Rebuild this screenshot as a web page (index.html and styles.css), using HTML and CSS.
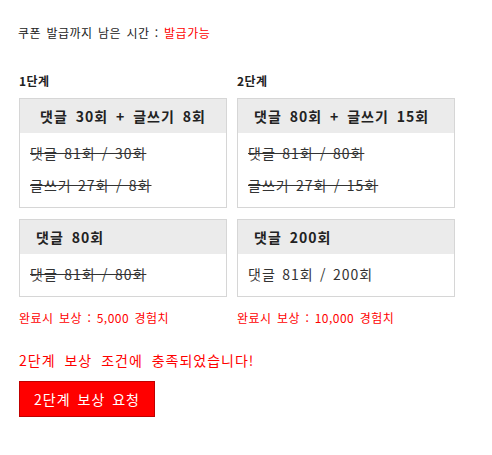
FILE: index.html
```html
<!DOCTYPE html>
<html lang="ko">
<head>
<meta charset="utf-8">
<link rel="stylesheet" href="styles.css">
</head>
<body>
<div class="page">
  <p class="timer">쿠폰 발급까지 남은 시간 : <span class="red">발급가능</span></p>
  <div class="stages">
    <div class="stage stage-1">
      <h3 class="stage-title">1단계</h3>
      <div class="box">
        <div class="box-head center">댓글 30회 + 글쓰기 8회</div>
        <div class="box-body">
          <p class="done">댓글 81회 / 30회</p>
          <p class="done">글쓰기 27회 / 8회</p>
        </div>
      </div>
      <div class="box">
        <div class="box-head">댓글 80회</div>
        <div class="box-body">
          <p class="done">댓글 81회 / 80회</p>
        </div>
      </div>
      <p class="reward">완료시 보상 : 5,000 경험치</p>
    </div>
    <div class="stage stage-2">
      <h3 class="stage-title">2단계</h3>
      <div class="box">
        <div class="box-head">댓글 80회 + 글쓰기 15회</div>
        <div class="box-body">
          <p class="done">댓글 81회 / 80회</p>
          <p class="done">글쓰기 27회 / 15회</p>
        </div>
      </div>
      <div class="box">
        <div class="box-head">댓글 200회</div>
        <div class="box-body">
          <p>댓글 81회 / 200회</p>
        </div>
      </div>
      <p class="reward">완료시 보상 : 10,000 경험치</p>
    </div>
  </div>
  <p class="msg">2단계 보상 조건에 충족되었습니다!</p>
  <button class="request" type="button">2단계 보상 요청</button>
</div>
</body>
</html>
```

FILE: styles.css
```css
* { box-sizing: border-box; }
body {
  margin: 0;
  background: #fff;
  font-family: "Noto Sans CJK KR", "Noto Sans", sans-serif;
  color: #333;
}
.page {
  padding: 24px 0 0 19px;
}
.timer {
  margin: 0 0 0 -1px;
  font-size: 12px;
  line-height: 18px;
  color: #222;
  letter-spacing: 0.5px;
  word-spacing: 1.5px;
}
.red { color: #ff0000; }
.stages {
  display: flex;
  gap: 10px;
  margin-top: 31px;
}
.stage-1 { width: 208px; }
.stage-2 { width: 218px; }
.stage-title {
  margin: 0;
  font-size: 12px;
  line-height: 16px;
  font-weight: bold;
  color: #222;
  letter-spacing: 0.5px;
}
.box {
  border: 1px solid #d6d6d6;
  margin-top: 9px;
}
.box + .box { margin-top: 11px; }
.box-head {
  background: #ebebeb;
  height: 34px;
  line-height: 34px;
  font-size: 14px;
  font-weight: bold;
  color: #222;
  padding-left: 16px;
  letter-spacing: 1px;
  word-spacing: 3px;
  white-space: nowrap;
}
.box-head.center {
  text-align: center;
  padding-left: 0;
}
.box-body {
  padding: 10px 10px 11px 10px;
}
.box-body p {
  margin: 0;
  font-size: 14px;
  line-height: 21px;
  color: #333;
  letter-spacing: 1px;
  word-spacing: 1.5px;
}
.box-body p + p { margin-top: 11px; }
.box-body p.done { text-decoration: line-through; }
.reward {
  margin: 12px 0 0;
  font-size: 12px;
  line-height: 18px;
  color: #ff0000;
  letter-spacing: 0.5px;
  word-spacing: 1.5px;
}
.msg {
  margin: 23px 0 0;
  font-size: 14px;
  line-height: 20px;
  color: #ff0000;
  letter-spacing: 1px;
  word-spacing: 4px;
}
.request {
  display: block;
  margin-top: 11px;
  width: 136px;
  height: 36px;
  background: #ff0000;
  border: 1px solid #c00000;
  color: #fff;
  font-family: inherit;
  font-size: 14px;
  letter-spacing: 1px;
  word-spacing: 2px;
  padding: 0;
}
```
